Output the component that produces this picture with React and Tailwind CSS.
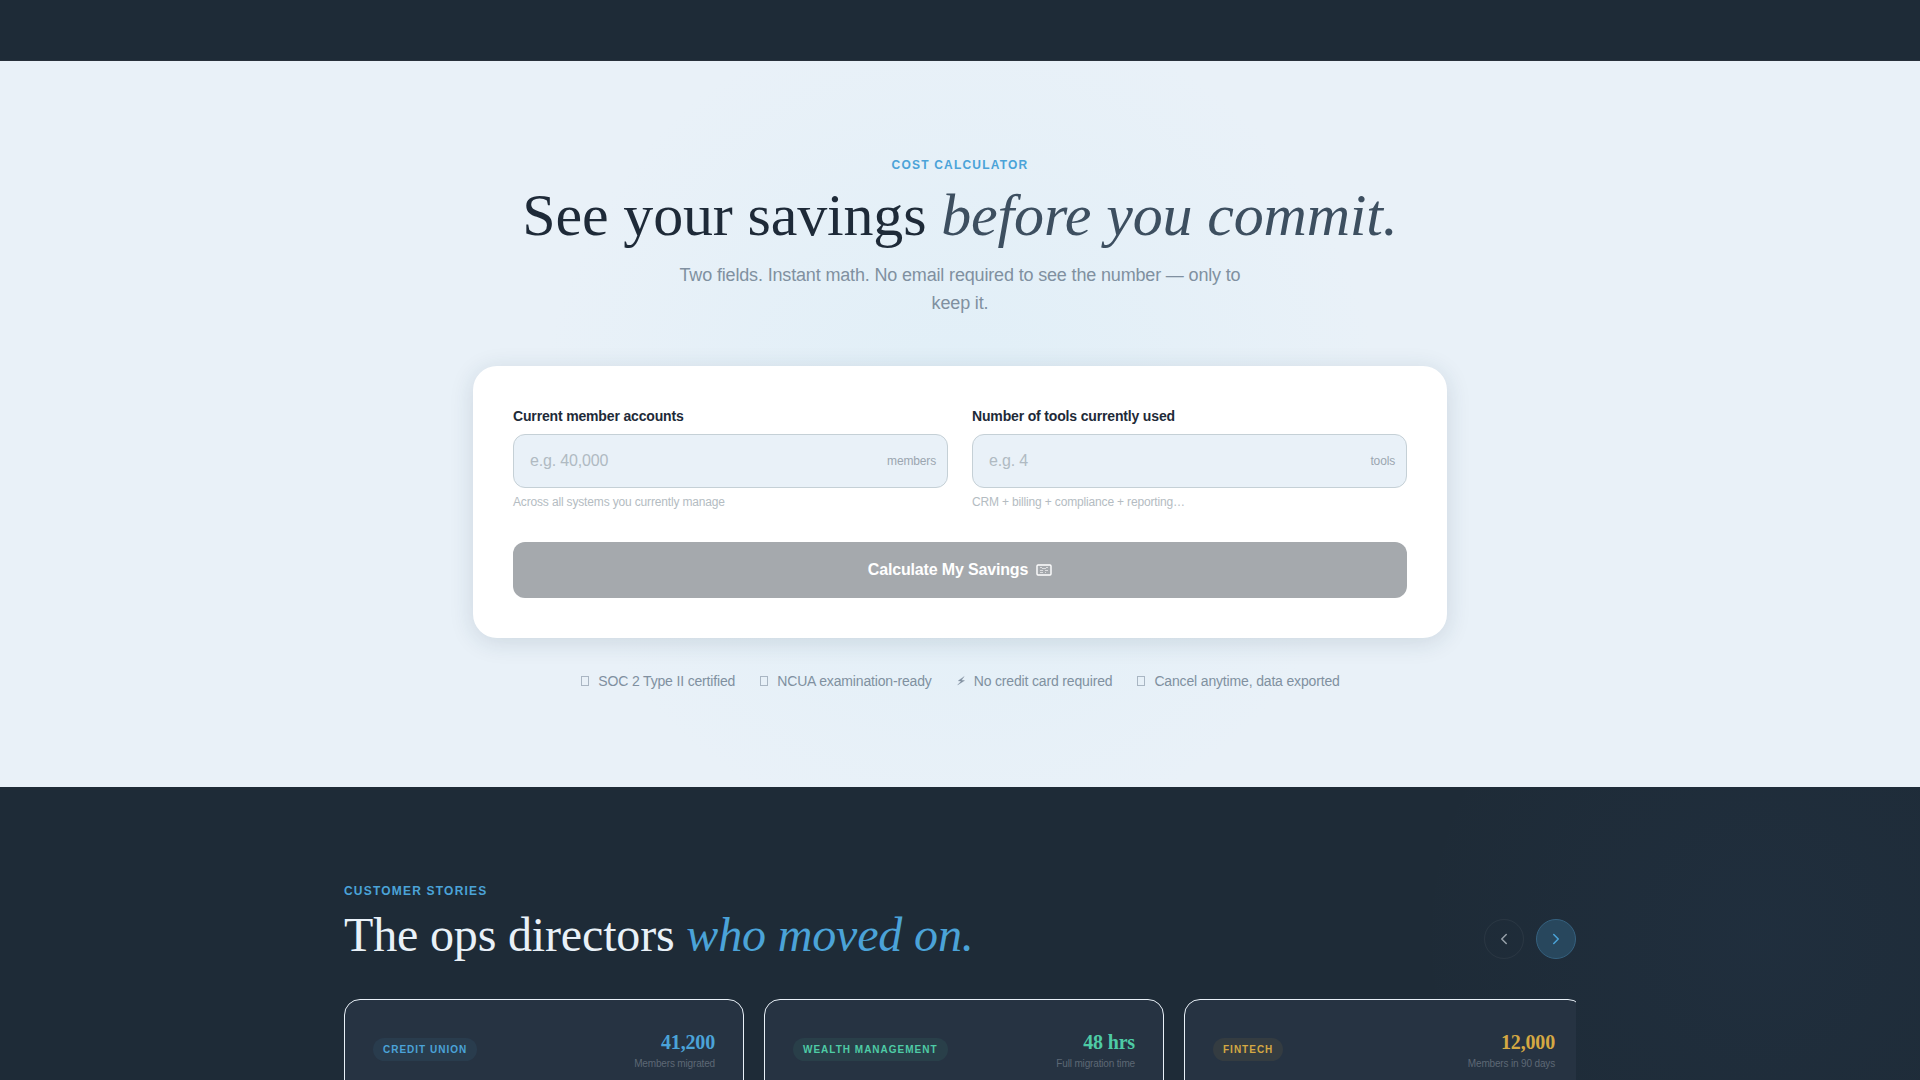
import { useState } from "react";
import { ChevronLeft, ChevronRight } from "lucide-react";

const FIELDS = [
  {
    id: "members",
    label: "Current member accounts",
    placeholder: "e.g. 40,000",
    unit: "members",
    hint: "Across all systems you currently manage",
  },
  {
    id: "tools",
    label: "Number of tools currently used",
    placeholder: "e.g. 4",
    unit: "tools",
    hint: "CRM + billing + compliance + reporting…",
  },
];

const TRUST_ITEMS = [
  { icon: "box", text: "SOC 2 Type II certified" },
  { icon: "box", text: "NCUA examination-ready" },
  { icon: "bolt", text: "No credit card required" },
  { icon: "box", text: "Cancel anytime, data exported" },
];

const STORIES = [
  {
    tag: "Credit Union",
    value: "41,200",
    caption: "Members migrated",
    tagClass: "bg-[#4ba3d8]/8 text-[#4ba3d8]",
    valueClass: "text-[#4ba3d8]",
  },
  {
    tag: "Wealth Management",
    value: "48 hrs",
    caption: "Full migration time",
    tagClass: "bg-[#4ecba5]/8 text-[#4ecba5]",
    valueClass: "text-[#4ecba5]",
  },
  {
    tag: "Fintech",
    value: "12,000",
    caption: "Members in 90 days",
    tagClass: "bg-[#d4a843]/8 text-[#d4a843]",
    valueClass: "text-[#d4a843]",
  },
];

function Eyebrow({ children }) {
  return (
    <p className="text-xs font-bold tracking-[0.1em] uppercase text-[#4ba3d8]">
      {children}
    </p>
  );
}

function TrustIcon({ name }) {
  return (
    <svg className="h-3 w-[10px]" viewBox="0 0 10 12" fill="none" stroke="currentColor" aria-hidden="true">
      {name === "bolt" ? (
        <path d="M8.2 1.5 2.2 5.8 5.2 6.2 1.6 10 8.6 5.6 5.4 5.2Z" fill="currentColor" strokeWidth="0.3" />
      ) : (
        <rect x="1.5" y="1.5" width="7" height="9" strokeWidth="1" opacity="0.6" />
      )}
    </svg>
  );
}

function Field({ field, value, onChange }) {
  return (
    <div>
      <label htmlFor={field.id} className="block text-sm leading-5 font-bold text-[#1e2a38]">
        {field.label}
      </label>
      <div className="relative mt-2">
        <input
          id={field.id}
          type="text"
          value={value}
          onChange={(e) => onChange(e.target.value)}
          placeholder={field.placeholder}
          className="block w-full h-[54px] rounded-xl border border-[#c5d0d6] bg-[#e9f1f8] pl-4 pr-20 text-base text-[#1e2a38] placeholder:text-[#b0bac2] outline-none"
        />
        <span className="absolute right-3 inset-y-0 flex items-center text-xs text-[#9ba6b0]">
          {field.unit}
        </span>
      </div>
      <p className="mt-[5px] text-xs leading-[18px] text-[#b4bcc2]">{field.hint}</p>
    </div>
  );
}

function Calculator() {
  const [values, setValues] = useState({ members: "", tools: "" });
  const ready = values.members && values.tools;

  return (
    <form
      onSubmit={(e) => e.preventDefault()}
      className="mt-[49px] mx-auto w-full max-w-[974px] rounded-3xl bg-white p-10 shadow-[0_4px_24px_rgba(30,60,75,0.14)]"
    >
      <div className="grid grid-cols-2 gap-6">
        {FIELDS.map((field) => (
          <Field
            key={field.id}
            field={field}
            value={values[field.id]}
            onChange={(v) => setValues({ ...values, [field.id]: v })}
          />
        ))}
      </div>
      <button
        type="submit"
        disabled={!ready}
        className="mt-[31px] flex h-14 w-full items-center justify-center gap-2 rounded-xl bg-[#1e2a30] text-base font-bold text-white disabled:bg-[#a5a9ad]"
      >
        Calculate My Savings
        <svg className="w-4 h-3" viewBox="0 0 16 12" fill="none" stroke="currentColor" aria-hidden="true">
          <rect x="1" y="1" width="14" height="10" rx="1" strokeWidth="1.4" />
          <path d="M4 3.5h2M10 3.5h2M6 4.5h4M4 6.5h3M9 6.5h3M4 8.5h3M9 8.5h1" opacity="0.6" />
        </svg>
      </button>
    </form>
  );
}

function StoryCard({ story }) {
  return (
    <article className="h-80 w-[400px] shrink-0 rounded-2xl border border-[#e8f0f7] bg-[#263342] p-7">
      <div className="flex items-center justify-between">
        <span
          className={`rounded-full px-[10px] py-1 text-[10px] leading-[15px] font-bold tracking-[0.1em] uppercase ${story.tagClass}`}
        >
          {story.tag}
        </span>
        <div className="text-right">
          <div className={`font-['Liberation_Serif',serif] text-xl leading-7 font-bold ${story.valueClass}`}>
            {story.value}
          </div>
          <div className="text-[10px] leading-[15px] text-[#5d6875]">{story.caption}</div>
        </div>
      </div>
    </article>
  );
}

export default function App() {
  return (
    <div className="flex h-screen flex-col overflow-hidden bg-[#1e2a38] font-['Liberation_Sans',Arial,sans-serif] tracking-[-0.01em]">
      <div className="h-[61px] shrink-0 border-b border-[#27303a] bg-[#1e2b37]" />

      {/* Cost calculator */}
      <section className="shrink-0 bg-[#e9f1f8] bg-[radial-gradient(circle_at_50%_50%,rgba(222,238,247,0.8)_0px,rgba(233,241,248,0)_420px)] px-6 py-24 text-center">
        <Eyebrow>Cost Calculator</Eyebrow>
        <h2 className="mt-3 font-['Liberation_Serif',serif] text-6xl leading-none text-[#1e2a38]">
          See your savings <em className="text-[#3d4f60]">before you commit.</em>
        </h2>
        <p className="mx-auto mt-4 max-w-xl text-lg leading-7 text-[#8090a0]">
          Two fields. Instant math. No email required to see the number — only to keep it.
        </p>
        <div className="text-left">
          <Calculator />
        </div>
        <ul className="mt-[33px] flex justify-center gap-6 text-sm leading-5 text-[#8090a0]">
          {TRUST_ITEMS.map((item) => (
            <li key={item.text} className="flex items-center gap-2">
              <TrustIcon name={item.icon} />
              {item.text}
            </li>
          ))}
        </ul>
      </section>

      {/* Customer stories */}
      <section className="flex-1 bg-[#1e2b37] bg-[radial-gradient(circle_at_1760px_150px,rgba(75,130,216,0.04)_0px,rgba(75,150,216,0)_350px)] pt-24">
        <div className="mx-auto max-w-7xl px-6">
          <div className="flex items-end justify-between">
            <div>
              <Eyebrow>Customer Stories</Eyebrow>
              <h2 className="mt-3 font-['Liberation_Serif',serif] text-5xl leading-none text-[#e9f1f8]">
                The ops directors <em className="text-[#4ba3d8]">who moved on.</em>
              </h2>
            </div>
            <div className="flex gap-3">
              <button
                aria-label="Previous story"
                className="flex size-10 items-center justify-center rounded-full border border-white/5 text-[#98a1aa]"
              >
                <ChevronLeft className="size-[18px]" />
              </button>
              <button
                aria-label="Next story"
                className="flex size-10 items-center justify-center rounded-full border border-[#35617f] bg-[#28475d] text-[#4ba3d8]"
              >
                <ChevronRight className="size-[18px]" />
              </button>
            </div>
          </div>
          <div className="mt-10 flex gap-5 overflow-hidden">
            {STORIES.map((story) => (
              <StoryCard key={story.tag} story={story} />
            ))}
          </div>
        </div>
      </section>
    </div>
  );
}
